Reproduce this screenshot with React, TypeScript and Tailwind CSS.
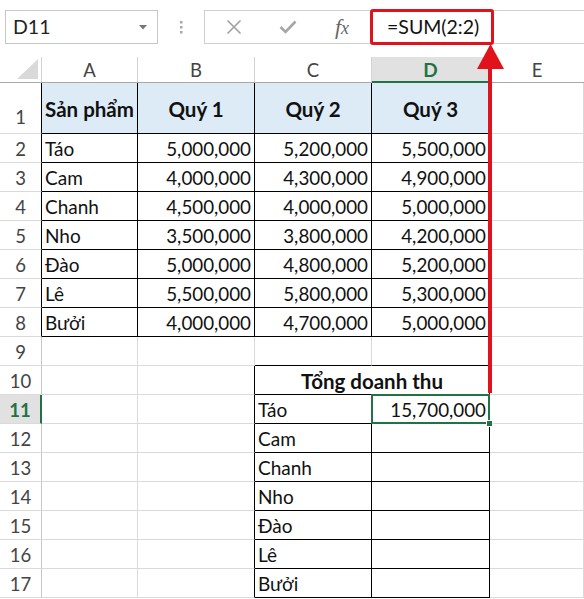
import React from 'react';

const FONT = { fontFamily: 'Lato, "Noto Sans", "Liberation Sans", sans-serif' };

const rows: string[][] = [
  ['Táo', '5,000,000', '5,200,000', '5,500,000'],
  ['Cam', '4,000,000', '4,300,000', '4,900,000'],
  ['Chanh', '4,500,000', '4,000,000', '5,000,000'],
  ['Nho', '3,500,000', '3,800,000', '4,200,000'],
  ['Đào', '5,000,000', '4,800,000', '5,200,000'],
  ['Lê', '5,500,000', '5,800,000', '5,300,000'],
  ['Bưởi', '4,000,000', '4,700,000', '5,000,000'],
];

const fruits = ['Cam', 'Chanh', 'Nho', 'Đào', 'Lê', 'Bưởi'];

function RowHead({ n, black, sel, tall }: { n: number; black?: boolean; sel?: boolean; tall?: boolean }) {
  const right = sel
    ? 'border-r-2 border-r-[#217346] bg-[#e1e1e1] text-[#217346] font-bold'
    : black
    ? 'border-r border-r-black text-[#444]'
    : 'border-r border-r-[#c8c8c8] text-[#444]';
  return (
    <div
      className={`flex justify-center border-b border-b-[#dadada] text-[18.5px] ${tall ? 'items-end pb-[1px]' : 'items-center pt-[3px]'} ${right}`}
    >
      {n}
    </div>
  );
}

function Gray({ rightBlack, bottomBlack }: { rightBlack?: boolean; bottomBlack?: boolean }) {
  return (
    <div
      className={`border-r border-b ${rightBlack ? 'border-r-black' : 'border-r-[#dadada]'} ${
        bottomBlack ? 'border-b-black' : 'border-b-[#dadada]'
      }`}
    />
  );
}

export default function App() {
  return (
    <div className="relative w-[584px] h-[599px] overflow-hidden bg-white text-[#111]" style={FONT}>
      {/* Formula bar */}
      <div className="flex h-[55px] items-start pt-[10px]">
        <div className="ml-[5px] flex h-[34px] w-[153px] items-center justify-between border border-[#c6c6c6] pl-[7px] pr-[10px]">
          <span className="text-[19.5px] text-[#222]">D11</span>
          <svg width="8" height="5" viewBox="0 0 8 5">
            <polygon points="0,0 8,0 4,4.5" fill="#777" />
          </svg>
        </div>
        <div className="flex h-[34px] w-[46px] items-center justify-center">
          <svg width="3" height="13" viewBox="0 0 3 13">
            <rect x="0" y="0" width="2.5" height="2.5" fill="#a8a8a8" />
            <rect x="0" y="5" width="2.5" height="2.5" fill="#a8a8a8" />
            <rect x="0" y="10" width="2.5" height="2.5" fill="#a8a8a8" />
          </svg>
        </div>
        <div className="flex h-[34px] flex-1 items-center border-y border-l border-[#cfcfcf]">
          <div className="flex w-[165px] items-center">
            <div className="flex w-[56px] justify-center pl-[2px]">
              <svg width="16" height="16" viewBox="0 0 16 16">
                <path d="M1.5 1.5 L14.5 14.5 M14.5 1.5 L1.5 14.5" stroke="#a0a0a0" strokeWidth="1.6" fill="none" />
              </svg>
            </div>
            <div className="flex w-[54px] justify-center">
              <svg width="18" height="14" viewBox="0 0 18 14">
                <path d="M1.5 7 L6.5 12 L16.5 1.5" stroke="#a6a6a6" strokeWidth="2.6" fill="none" />
              </svg>
            </div>
            <div className="flex w-[54px] justify-center">
              <span
                className="text-[22px] italic leading-none text-[#666]"
                style={{ fontFamily: '"Liberation Serif", serif' }}
              >
                f<span className="text-[18px]">x</span>
              </span>
            </div>
          </div>
          <div className="-my-px flex h-[36px] w-[124px] items-center rounded-[3px] border-[3px] border-[#e0131c] pl-[14px]">
            <span className="text-[19.5px] text-[#111]">=SUM(2:2)</span>
          </div>
        </div>
      </div>

      {/* Grid */}
      <div className="grid grid-cols-[42px_96px_117px_117px_118px_1fr] grid-rows-[28px_51px_repeat(16,29px)] text-[19px]">
        {/* Column headers */}
        <div className="flex items-end justify-end border-r border-b border-r-[#d4d4d4] border-b-[#a8a8a8] pr-[3px] pb-[3px] mt-[2px]">
          <svg width="21" height="20" viewBox="0 0 21 20">
            <polygon points="21,0 21,20 0,20" fill="#d9d9d9" />
          </svg>
        </div>
        {['A', 'B', 'C'].map((c) => (
          <div
            key={c}
            className="mt-[2px] flex items-center justify-center border-r border-b border-r-[#d4d4d4] border-b-[#a8a8a8] pt-[2px] text-[18.5px] text-[#444]"
          >
            {c}
          </div>
        ))}
        <div className="mt-[2px] flex items-center justify-center border-r border-b-2 border-r-[#d4d4d4] border-b-[#217346] bg-[#e1e1e1] pt-[2px] text-[19px] font-bold text-[#217346]">
          D
        </div>
        <div className="mt-[2px] flex items-center justify-center border-b border-b-[#a8a8a8] pt-[2px] text-[18.5px] text-[#444]">
          E
        </div>

        {/* Row 1 */}
        <RowHead n={1} black tall />
        {['Sản phẩm', 'Quý 1', 'Quý 2', 'Quý 3'].map((h) => (
          <div
            key={h}
            className="flex items-center justify-center whitespace-nowrap border-r border-b border-r-black border-b-black bg-[#ddebf7] pt-[3px] text-[20.5px] font-bold"
          >
            {h}
          </div>
        ))}
        <Gray />

        {/* Rows 2-8 */}
        {rows.map((r, i) => (
          <React.Fragment key={i}>
            <RowHead n={i + 2} black />
            <div className="flex items-center whitespace-nowrap border-r border-b border-r-black border-b-black pl-[3px] pt-[3px]">
              {r[0]}
            </div>
            {r.slice(1).map((v, j) => (
              <div
                key={j}
                className="flex items-center justify-end border-r border-b border-r-black border-b-black pr-[3px] pt-[3px] text-[18.8px]"
              >
                {v}
              </div>
            ))}
            <Gray />
          </React.Fragment>
        ))}

        {/* Row 9 */}
        <RowHead n={9} />
        <Gray />
        <Gray />
        <Gray bottomBlack />
        <Gray bottomBlack />
        <Gray />

        {/* Row 10 */}
        <RowHead n={10} />
        <Gray />
        <Gray rightBlack />
        <div className="col-span-2 flex items-center justify-center border-r border-b border-r-black border-b-black pt-[3px] text-[20.5px] font-bold">
          Tổng doanh thu
        </div>
        <Gray />

        {/* Row 11 */}
        <RowHead n={11} sel />
        <Gray />
        <Gray rightBlack />
        <div className="flex items-center border-r border-b border-r-black border-b-black pl-[3px] pt-[3px]">Táo</div>
        <div className="relative flex items-center justify-end border-r border-b border-r-black border-b-black pr-[3px] pt-[3px] text-[18.8px]">
          15,700,000
          <div className="pointer-events-none absolute -top-px -left-px -right-px -bottom-px border-2 border-[#217346]" />
          <div className="absolute -right-[4px] -bottom-[4px] h-[7px] w-[7px] border border-white bg-[#217346]" />
        </div>
        <Gray />

        {/* Rows 12-17 */}
        {fruits.map((f, i) => (
          <React.Fragment key={f}>
            <RowHead n={i + 12} />
            <Gray />
            <Gray rightBlack />
            <div className="flex items-center whitespace-nowrap border-r border-b border-r-black border-b-black pl-[3px] pt-[3px]">
              {f}
            </div>
            <Gray rightBlack bottomBlack />
            <Gray />
          </React.Fragment>
        ))}
      </div>

      {/* Red arrow annotation */}
      <div className="absolute left-[488px] top-[66px] h-[327px] w-[4px] bg-[#e0131c]" />
      <svg className="absolute left-[477px] top-[44px]" width="27" height="25" viewBox="0 0 27 25">
        <polygon points="13.5,0 27,25 0,25" fill="#e0131c" />
      </svg>
    </div>
  );
}
